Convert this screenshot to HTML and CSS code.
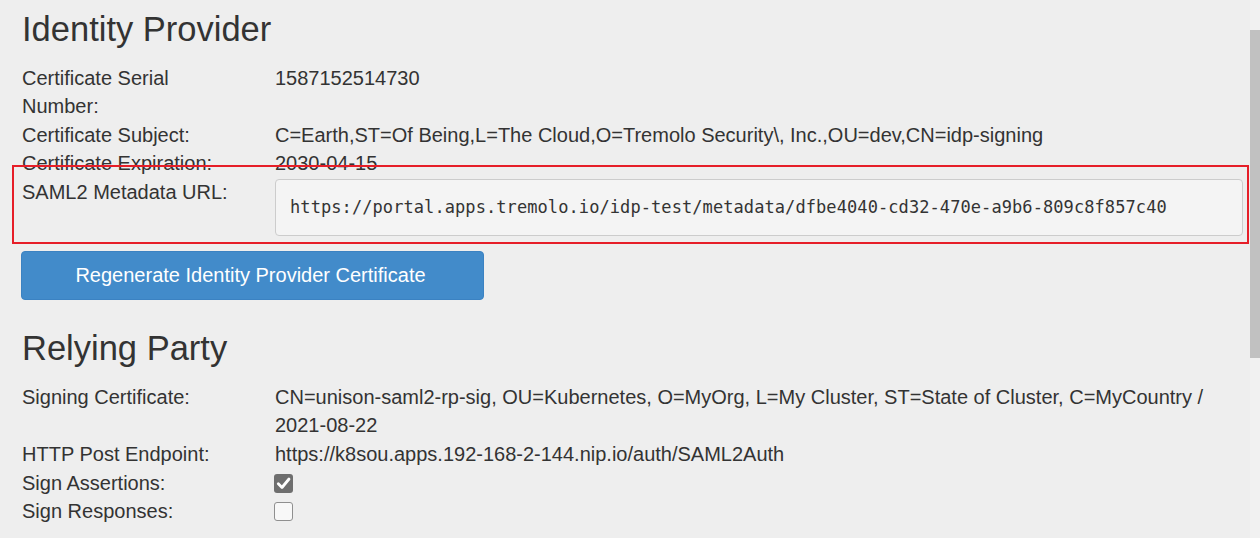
FILE: index.html
```html
<!DOCTYPE html>
<html>
<head>
<meta charset="utf-8">
<title>SAML2 Configuration</title>
<link rel="stylesheet" href="styles.css">
</head>
<body>
<div class="page">
  <section class="section">
    <h2 class="section-title">Identity Provider</h2>
    <div class="props">
      <div class="prop-label">Certificate Serial Number:</div>
      <div class="prop-value">1587152514730</div>
      <div class="prop-label">Certificate Subject:</div>
      <div class="prop-value">C=Earth,ST=Of Being,L=The Cloud,O=Tremolo Security\, Inc.,OU=dev,CN=idp-signing</div>
      <div class="prop-label">Certificate Expiration:</div>
      <div class="prop-value">2030-04-15</div>
      <div class="prop-label">SAML2 Metadata URL:</div>
      <div class="prop-value"><div class="url-field">https://portal.apps.tremolo.io/idp-test/metadata/dfbe4040-cd32-470e-a9b6-809c8f857c40</div></div>
    </div>
    <button class="btn-primary" type="button">Regenerate Identity Provider Certificate</button>
  </section>

  <section class="section section-rp">
    <h2 class="section-title">Relying Party</h2>
    <div class="props">
      <div class="prop-label">Signing Certificate:</div>
      <div class="prop-value">CN=unison-saml2-rp-sig, OU=Kubernetes, O=MyOrg, L=My Cluster, ST=State of Cluster, C=MyCountry / 2021-08-22</div>
      <div class="prop-label">HTTP Post Endpoint:</div>
      <div class="prop-value">https://k8sou.apps.192-168-2-144.nip.io/auth/SAML2Auth</div>
      <div class="prop-label">Sign Assertions:</div>
      <div class="prop-value check-cell">
        <span class="checkbox checked"><svg viewBox="0 0 19 19" width="19" height="19"><path d="M4.3 9.8 L8 13.5 L15 5" fill="none" stroke="#fff" stroke-width="2.8" stroke-linecap="round" stroke-linejoin="round"/></svg></span>
      </div>
      <div class="prop-label">Sign Responses:</div>
      <div class="prop-value check-cell"><span class="checkbox"></span></div>
    </div>
  </section>

  <div class="highlight-box"></div>
  <div class="scrollbar"><div class="scrollbar-thumb"></div></div>
</div>
</body>
</html>
```

FILE: styles.css
```css
html, body {
  margin: 0;
  padding: 0;
  background: #eeeeee;
  overflow: hidden;
}

body {
  font-family: "Liberation Sans", Arial, sans-serif;
  font-size: 20px;
  line-height: 1.428571;
  color: #333333;
}

.page {
  position: relative;
  width: 1260px;
  height: 538px;
  box-sizing: border-box;
  padding: 10px 0 0 22px;
}

.section {
  width: 1221px;
}

.section-rp {
  margin-top: 29px;
}

.section-title {
  margin: 0 0 15.8px 0;
  font-size: 34.5px;
  line-height: 38px;
  font-weight: 400;
  color: #333333;
}

.props {
  display: grid;
  grid-template-columns: 253px 1fr;
}

.prop-label {
  padding-right: 40px;
}

.check-cell {
  display: flex;
  align-items: center;
  height: 28.57px;
}

.url-field {
  margin-top: 1px;
  height: 57px;
  box-sizing: border-box;
  display: flex;
  align-items: center;
  padding: 0 14px;
  background: #f4f4f4;
  border: 1px solid #cccccc;
  border-radius: 4px;
  font-family: "DejaVu Sans Mono", "Liberation Mono", monospace;
  font-size: 17px;
  letter-spacing: 0.08px;
  color: #333333;
  white-space: nowrap;
}

.btn-primary {
  display: block;
  margin-top: 15px;
  margin-left: -1px;
  width: 463px;
  height: 49px;
  border: 1px solid #3b82c2;
  border-radius: 4px;
  background: #428bca;
  color: #ffffff;
  font-family: "Liberation Sans", Arial, sans-serif;
  font-size: 20px;
  padding: 0 4px 0 0;
}

.checkbox {
  display: inline-block;
  width: 19px;
  height: 19px;
  box-sizing: border-box;
  border: 1px solid #8f8f8f;
  border-radius: 3px;
  background: #f8f8f8;
  margin-left: -1px;
  margin-top: 1px;
}

.checkbox.checked {
  border: none;
  background: #6e6e6e;
}

.checkbox svg {
  display: block;
}

.highlight-box {
  position: absolute;
  left: 12px;
  top: 165px;
  width: 1237px;
  height: 79px;
  box-sizing: border-box;
  border: 2px solid #e61e28;
}

.scrollbar {
  position: absolute;
  right: 0;
  top: 0;
  width: 10px;
  height: 538px;
  background: #f1f1f1;
}

.scrollbar-thumb {
  margin-top: 30px;
  height: 328px;
  background: #c1c1c1;
}
```
